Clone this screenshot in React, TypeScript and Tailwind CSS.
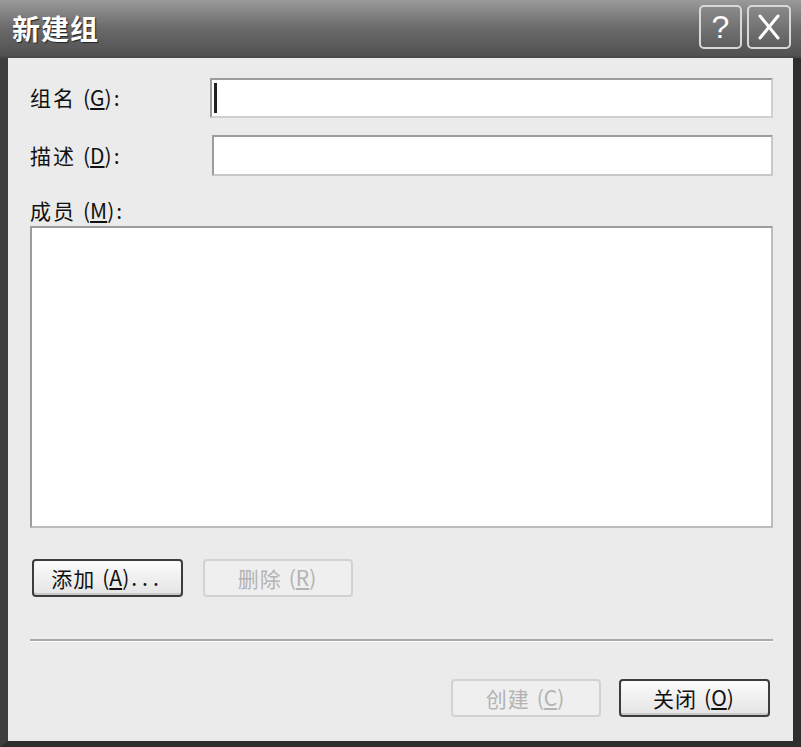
import React from "react";

const font = { fontFamily: '"Noto Sans CJK SC", "DejaVu Sans", sans-serif' };

function Key({ k }: { k: string }) {
  return (
    <span className="ml-[7px] mr-[2px] tracking-normal">
      (<span className="underline underline-offset-2">{k}</span>)
    </span>
  );
}

function Btn({
  label,
  k,
  dots,
  disabled,
}: {
  label: string;
  k: string;
  dots?: boolean;
  disabled?: boolean;
}) {
  return (
    <button
      type="button"
      disabled={disabled}
      className={
        disabled
          ? "flex h-[38px] w-[150px] items-center justify-center rounded-[4px] border-2 border-[#d2d2d2] bg-[#efefef] text-[21px] text-[#b3b3b3] tracking-[1px]"
          : "flex h-[38px] w-[151px] items-center justify-center rounded-[4px] border-2 border-[#3c3c3c] bg-gradient-to-b from-[#fbfbfb] to-[#e4e4e4] text-[21px] text-[#111] tracking-[1px] shadow-[inset_0_-2px_0_#c9c9c9]"
      }
    >
      <span className="leading-none">{label}</span>
      <Key k={k} />
      {dots && <span className="tracking-[5px]">...</span>}
    </button>
  );
}

export default function App() {
  return (
    <div className="h-[747px] w-[801px] overflow-hidden bg-[#333]" style={font}>
      <div className="flex h-full w-full flex-col">
        {/* title bar */}
        <div className="flex h-[58px] shrink-0 items-center justify-between border-b-2 border-[#4a4a4a] bg-gradient-to-b from-[#9a9a9a] via-[#6a6a6a] to-[#515151] pl-[12px] pr-[10px]">
          <span className="text-[28px] font-bold tracking-[1px] text-white [text-shadow:1px_1px_1px_#222]">
            新建组
          </span>
          <div className="flex gap-[5px] pb-[2px]">
            <div className="flex h-[44px] w-[43px] items-center justify-center rounded-[5px] border-2 border-[#d8d8d8] bg-gradient-to-b from-[#8a8a8a] to-[#5e5e5e]">
              <span className="text-[32px] leading-none text-white" style={{ fontFamily: '"Liberation Sans", sans-serif' }}>
                ?
              </span>
            </div>
            <div className="flex h-[44px] w-[44px] items-center justify-center rounded-[5px] border-2 border-[#d8d8d8] bg-gradient-to-b from-[#8a8a8a] to-[#5e5e5e]">
              <svg width="26" height="28" viewBox="0 0 26 28">
                <path d="M4 3 L22 25 M22 3 L4 25" stroke="white" strokeWidth="3" strokeLinecap="round" />
              </svg>
            </div>
          </div>
        </div>

        {/* body with side frame */}
        <div className="flex flex-1 border-x-[8px] border-b-[6px] border-l-[#3e3e3e] border-r-[#2e2e2e] border-b-[#2e2e2e]">
          <div className="flex flex-1 flex-col bg-[#ebebeb] pl-[22px] pr-[20px] pt-[20px] text-[21px] text-[#111]">
            <div className="flex h-[40px] items-center">
              <div className="w-[180px] tracking-[2px]">
                组名<Key k="G" />:
              </div>
              <div className="flex h-[40px] flex-1 items-center border-2 border-[#9c9c9c] border-b-[#d0d0d0] border-r-[#d0d0d0] bg-white pl-[2px]">
                <div className="h-[30px] w-[3px] bg-[#222]" />
              </div>
            </div>
            <div className="mt-[17px] flex h-[41px] items-center">
              <div className="w-[182px] tracking-[2px]">
                描述<Key k="D" />:
              </div>
              <div className="h-[41px] flex-1 border-2 border-[#9c9c9c] border-b-[#c8c8c8] border-r-[#c8c8c8] bg-white" />
            </div>
            <div className="mt-[20px] h-[28px] leading-[28px] tracking-[2px]">
              成员<Key k="M" />:
            </div>
            <div className="mt-[2px] h-[302px] border-2 border-[#9c9c9c] border-b-[#bdbdbd] border-r-[#bdbdbd] bg-white" />

            <div className="mt-[31px] flex gap-[20px] pl-[2px]">
              <Btn label="添加" k="A" dots />
              <Btn label="删除" k="R" disabled />
            </div>

            <div className="mt-[42px] h-[3px] border-t-2 border-[#a9a9a9] border-b border-b-white" />

            <div className="mt-[37px] flex justify-end gap-[18px] pr-[3px]">
              <Btn label="创建" k="C" disabled />
              <Btn label="关闭" k="O" />
            </div>
          </div>
        </div>
      </div>
    </div>
  );
}
